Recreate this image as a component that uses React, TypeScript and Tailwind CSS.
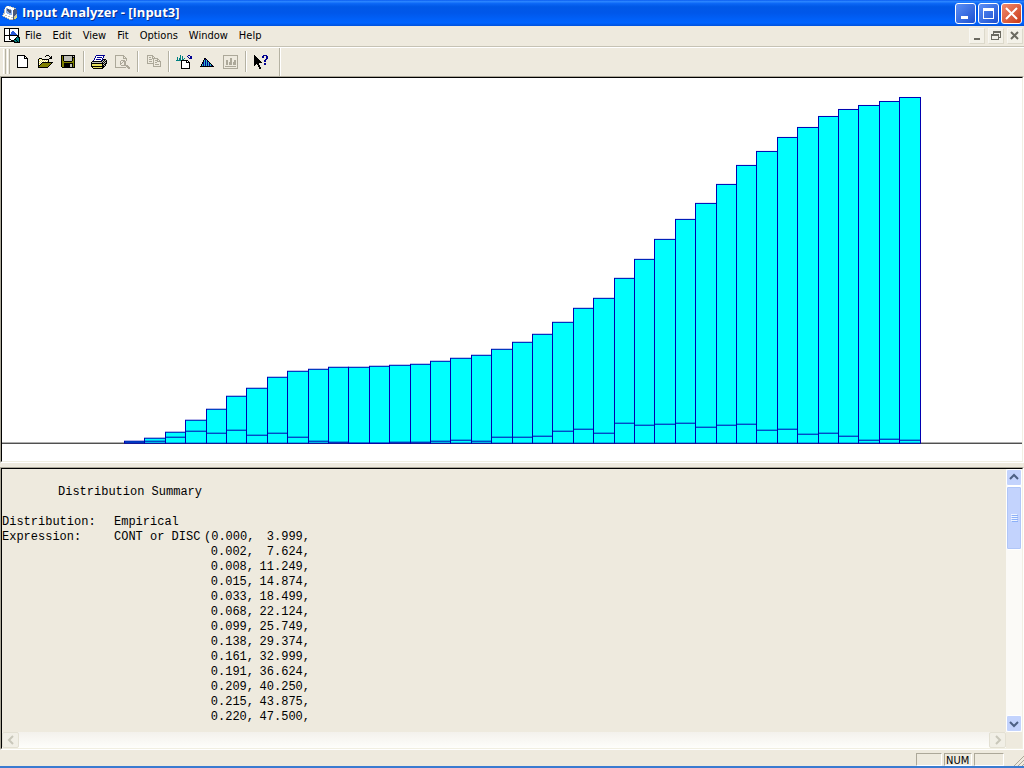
import React from "react";
import { clsx } from "clsx";

const PALETTE: Record<string, string> = {
  K: "#000000",
  W: "#ffffff",
  Y: "#e8e060",
  O: "#808000",
  G: "#aca899",
  S: "#c0c0b8",
  T: "#008080",
  C: "#30b8c8",
  N: "#000090",
  B: "#2858d8",
  D: "#4a5878",
  L: "#8fb0e8",
};

interface PixelIconProps {
  rows: string[];
}

function PixelIcon({ rows }: PixelIconProps) {
  return (
    <svg
      width="16"
      height="16"
      viewBox="0 0 16 16"
      shapeRendering="crispEdges"
      aria-hidden="true"
      className="shrink-0"
    >
      {rows.map((row, y) =>
        row
          .split("")
          .map((c, x) =>
            PALETTE[c] ? (
              <rect key={`${x}-${y}`} x={x} y={y} width="1" height="1" fill={PALETTE[c]} />
            ) : null
          )
      )}
    </svg>
  );
}

const ICONS: Record<string, string[]> = {
  new: [
    "...KKKKKKKK.....",
    "...KWWWWWWKK....",
    "...KWWWWWWKWK...",
    "...KWWWWWWKKKK..",
    "...KWWWWWWWWWK..",
    "...KWWWWWWWWWK..",
    "...KWWWWWWWWWK..",
    "...KWWWWWWWWWK..",
    "...KWWWWWWWWWK..",
    "...KWWWWWWWWWK..",
    "...KWWWWWWWWWK..",
    "...KWWWWWWWWWK..",
    "...KKKKKKKKKKK..",
  ],
  open: [
    ".........KKK....",
    "........K...K.K.",
    ".............KK.",
    "..KKK.......KKK.",
    ".KYWYKKKKKKK....",
    ".KWYWYWYWYWK....",
    ".KYWYWYWYWYK....",
    ".KWYWKKKKKKKKKKK",
    ".KYWKOOOOOOOOOK.",
    ".KWKOOOOOOOOOK..",
    ".KKOOOOOOOOOK...",
    ".KOOOOOOOOOK....",
    ".KKKKKKKKKK.....",
  ],
  save: [
    ".KKKKKKKKKKKKKK.",
    ".KOKSSSSSSSSKSK.",
    ".KOKSSSSSSSSKKK.",
    ".KOKSSSSSSSSKOK.",
    ".KOKSSSSSSSSKOK.",
    ".KOKSSSSSSSSKOK.",
    ".KOOKKKKKKKKOOK.",
    ".KOOOOOOOOOOOOK.",
    ".KOOKKKKKKKKKOK.",
    ".KOOKKKKKKSSKOK.",
    ".KOOKKKKKKSSKOK.",
    ".KOOKKKKKKSSKOK.",
    "..KKKKKKKKKKKKK.",
  ],
  print: [
    ".....NNNNNNNNN..",
    "....NWWWWWWWN...",
    "....NWNNNNNWN...",
    "...NWWWWWWWN....",
    "...NWNNNNNWNKKK.",
    "..NWWWWWWWNKSKSK",
    ".KKKKKKKKKKSKSKK",
    "KSSSSSSSSSSKSKSK",
    "KKKKKKKKKKKKKSKK",
    "KYYYYYYYYYYKSKK.",
    "KYYYYYYYYYYKKSK.",
    "KKKKKKKKKKKKKK..",
    ".KYYYYYYYYYKK...",
    "..KKKKKKKKKK....",
  ],
  preview: [
    ".GGGGGGGGG......",
    ".G.......GG.....",
    ".G.......G.G....",
    ".G.......GGGG...",
    ".G..........G...",
    ".G.....GGGG.G...",
    ".G....G..GGG....",
    ".G....G.G.GG....",
    ".G....GG..GG....",
    ".G....G...GG....",
    ".G.....GGGGGGG..",
    ".G..........GGG.",
    ".GGGGGGGGGGG.GGG",
    "..............GG",
  ],
  copy: [
    "..GGGGGG........",
    "..G....GG.......",
    "..G.GG.G.G......",
    "..G....GGGGGG...",
    "..G.GGG.G...GG..",
    "..G.....G.GGG.G.",
    "..G.GGG.G...GGGG",
    "..G.....G.GG...G",
    "..GGGGGGG......G",
    "........G.GGGG.G",
    "........G......G",
    "........GGGGGGGG",
  ],
  input: [
    "....T.......NN..",
    "....T.T....N..NN",
    ".T..T.T.....N.NN",
    ".T.TT.T.T....NNN",
    ".T.TT.TT........",
    "TTTTTKKKKKKK....",
    ".....KWWWWKWK...",
    ".....KWWWWKKKK..",
    ".....KWWWWWWWK..",
    ".....KWWWWWWWK..",
    ".....KWWWWWWWK..",
    ".....KWWWWWWWK..",
    ".....KWWWWWWWK..",
    ".....KKKKKKKKK..",
  ],
  fit: [
    "................",
    "................",
    "................",
    ".....KK.........",
    ".....KNK........",
    "....KCNCK.......",
    "....KCNCNK......",
    "...KNCNCNCK.....",
    "...KNCNCNCNK....",
    "..KCNCNCNCNCK...",
    "..KCNCNCNCNCNK..",
    ".KKKKKKKKKKKKKK.",
  ],
  chart: [
    ".GGGGGGGGGGGGGGG",
    ".G.............G",
    ".G.............G",
    ".G......GG.....G",
    ".G......GG.....G",
    ".G..GG..GG..GG.G",
    ".G..GG..GG..GG.G",
    ".G..GG.GGG.GGG.G",
    ".G..GG.GGG.GGG.G",
    ".G..GG.GGG.GGG.G",
    ".G.............G",
    ".G.GGGGGGGGGGG.G",
    ".G.............G",
    ".GGGGGGGGGGGGGGG",
  ],
  help: [
    ".K........NNNN..",
    ".KK......NN..NN.",
    ".KKK.....NN..NN.",
    ".KKKK........NN.",
    ".KKKKK......NN..",
    ".KKKKKK....NN...",
    ".KKKKKKK...NN...",
    ".KKKKKKKK.......",
    ".KKKKK.....NN...",
    ".KK.KK.....NN...",
    ".K...KK.........",
    ".....KK.........",
    "......KK........",
    "......KK........",
  ],
  doc: [
    "KKKKKKKKKKKKKKK.",
    "KWWWWKWWWWWWWWK.",
    "KWWWWKWWWWWWWWK.",
    "KWWWWKWWBBWWWWK.",
    "KWWWWKWBBBBWWWK.",
    "KWWWWKWBBBBBWWK.",
    "KWWWWKBBBBBBBWK.",
    "KKKKKKKKKKKKKKK.",
    "KWWWWKWWWWWWWKK.",
    "KWWWWKWWWWWWKTKK",
    "KWWWWKWWWWWKTTTK",
    "KWWWWKKWWWKKTTTK",
    "KWWWWWWKKKTTKTTK",
    "KKKKKKKKKKKTTKTK",
    "..........KKKKKK",
  ],
  app: [
    "................",
    "....SWWSS.......",
    "...SWWWWWWSS....",
    "...WLLWWWWWWSS..",
    "..SWLDDLLWWWDD..",
    "..SWLDDDDLWDDDD.",
    "..SWLLDDDLWDDDD.",
    "..SWLLLDDLWDDDD.",
    ".SSWWLLLLLWDDDD.",
    ".SWWWWWLLLWDDDS.",
    "SWWSSWWWWWWDDSS.",
    ".SSWWWSSWWWDSSY.",
    "...SSWWWWSSDSYY.",
    ".....SSWWWWDYY..",
    ".......SSSSDD...",
  ],
};

const MENUS = ["File", "Edit", "View", "Fit", "Options", "Window", "Help"];

const TOOLBAR = [
  [
    { icon: "new", label: "New" },
    { icon: "open", label: "Open" },
    { icon: "save", label: "Save" },
  ],
  [
    { icon: "print", label: "Print" },
    { icon: "preview", label: "Print Preview", disabled: true },
  ],
  [{ icon: "copy", label: "Copy", disabled: true }],
  [
    { icon: "input", label: "Use Existing Data File" },
    { icon: "fit", label: "Fit All" },
    { icon: "chart", label: "Histogram", disabled: true },
  ],
  [{ icon: "help", label: "Context Help" }],
];

// bar heights above the axis, one pair per interval
const CUMULATIVE = [
  2, 5, 11, 23, 34, 47, 55, 66, 72, 74, 76, 76, 77, 78, 79, 82, 85, 88, 94, 101,
  109, 121, 135, 145, 165, 184, 204, 224, 240, 259, 278, 292, 306, 316, 327, 334,
  338, 342, 346,
];
const DENSITY = [
  1, 2, 6, 12, 10, 13, 8, 10, 6, 2, 1, 0, 0, 1, 1, 2, 3, 2, 6, 6, 7, 12, 14, 10,
  20, 18, 19, 20, 16, 18, 19, 13, 14, 9, 10, 7, 3, 4, 3,
];

const AXIS_Y = 365;
const edge = (i: number) => Math.floor(102 + 20.4 * (i + 1));

function Histogram() {
  return (
    <svg
      viewBox="0 0 1020 383"
      preserveAspectRatio="none"
      shapeRendering="crispEdges"
      className="block h-full w-full"
      role="img"
      aria-label="Cumulative histogram"
    >
      <path d={`M0 ${AXIS_Y}.5H1020`} stroke="#000" />
      {CUMULATIVE.map((h, i) => {
        const x = edge(i);
        const w = edge(i + 1) - x;
        return (
          <g key={i} stroke="#0000b0">
            <rect x={x + 0.5} y={AXIS_Y - h + 0.5} width={w} height={h} fill="#00ffff" />
            <path d={`M${x} ${AXIS_Y - DENSITY[i]}.5h${w}`} />
          </g>
        );
      })}
    </svg>
  );
}

const EXPRESSION = [
  ["(0.000,", "3.999,"],
  ["0.002,", "7.624,"],
  ["0.008,", "11.249,"],
  ["0.015,", "14.874,"],
  ["0.033,", "18.499,"],
  ["0.068,", "22.124,"],
  ["0.099,", "25.749,"],
  ["0.138,", "29.374,"],
  ["0.161,", "32.999,"],
  ["0.191,", "36.624,"],
  ["0.209,", "40.250,"],
  ["0.215,", "43.875,"],
  ["0.220,", "47.500,"],
];

function Summary() {
  return (
    <div className="min-h-0 overflow-hidden pt-4 font-['Liberation_Mono',monospace] text-[12px] leading-[15px] whitespace-pre">
      <h2 className="mb-[15px] pl-14">Distribution Summary</h2>
      <table className="w-[308px] table-fixed border-collapse">
        <colgroup>
          <col className="w-28" />
          <col className="w-[90px]" />
          <col className="w-[50px]" />
          <col className="w-14" />
        </colgroup>
        <tbody>
          <tr>
            <th scope="row" className="p-0 text-left font-normal">
              Distribution:
            </th>
            <td className="p-0" colSpan={3}>
              Empirical
            </td>
          </tr>
          {EXPRESSION.map(([probability, value], i) => (
            <tr key={value}>
              <th scope="row" className="p-0 text-left font-normal">
                {i === 0 && "Expression:"}
              </th>
              <td className="p-0">{i === 0 && "CONT or DISC"}</td>
              <td className="p-0 text-right">{probability}</td>
              <td className="p-0 text-right">{value}</td>
            </tr>
          ))}
        </tbody>
      </table>
    </div>
  );
}

interface ArrowProps {
  d: string;
  color: string;
}

function Arrow({ d, color }: ArrowProps) {
  return (
    <svg width="10" height="10" viewBox="0 0 10 10" fill="none" stroke={color} strokeWidth="2">
      <path d={d} />
    </svg>
  );
}

interface PaneProps {
  className: string;
  children: React.ReactNode;
}

function Pane({ className, children }: PaneProps) {
  return (
    <section
      className={clsx(
        "min-h-0 border border-t-[#aca899] border-l-[#aca899] border-r-white border-b-white",
        className
      )}
    >
      <div className="h-full border border-t-black border-l-black border-r-[#f1efe2] border-b-[#f1efe2]">
        {children}
      </div>
    </section>
  );
}

const CAPTION_BUTTON =
  "flex h-[21px] w-[21px] items-center justify-center rounded-[3px] border border-white";
const MDI_BUTTON =
  "flex h-4 w-4 items-center justify-center border border-t-[#f8f7f2] border-l-[#f8f7f2] border-r-[#dcd9cb] border-b-[#dcd9cb] bg-[#f3f1e8]";
const SCROLL_BUTTON =
  "flex h-[17px] w-full shrink-0 items-center justify-center rounded-[2px] border border-white bg-[#c3d3fd]";
const SCROLL_BUTTON_OFF =
  "flex h-4 w-[17px] items-center justify-center rounded-[2px] border border-[#e3e0d3] bg-[#f1efe6]";
const STATUS_CELL =
  "h-[13px] border border-t-[#aca899] border-l-[#aca899] border-r-white border-b-white pl-px";

export default function App() {
  return (
    <div className="flex h-screen flex-col overflow-hidden bg-[#eeeade] font-['DejaVu_Sans_Condensed','DejaVu_Sans',sans-serif] text-[11px] text-black">
      <header className="flex h-[26px] shrink-0 items-center bg-[linear-gradient(to_bottom,#0a5cf0_0%,#2a85ff_6%,#0a66f5_14%,#0058e6_26%,#0057ea_50%,#0060f8_74%,#0064ff_88%,#0052dc_100%)] pr-0.5 pl-0.5">
        <PixelIcon rows={ICONS.app} />
        <h1 className="flex-1 pl-1 font-['Open_Sans','Noto_Sans',sans-serif] text-[13px] font-bold whitespace-nowrap text-white [text-shadow:1px_1px_0_#0a2f8c]">
          Input Analyzer - [Input3]
        </h1>
        <div className="flex gap-0.5">
          <button
            aria-label="Minimize"
            className={clsx(CAPTION_BUTTON, "bg-linear-to-br from-[#5d8ff5] to-[#1c4fd0]")}
          >
            <svg width="15" height="15" viewBox="0 0 15 15">
              <path d="M3 10h7v3H3z" fill="#fff" />
            </svg>
          </button>
          <button
            aria-label="Maximize"
            className={clsx(CAPTION_BUTTON, "bg-linear-to-br from-[#5d8ff5] to-[#1c4fd0]")}
          >
            <svg width="15" height="15" viewBox="0 0 15 15">
              <path d="M2 2h11v11H2zM3 5v7h9V5z" fill="#fff" fillRule="evenodd" />
            </svg>
          </button>
          <button
            aria-label="Close"
            className={clsx(CAPTION_BUTTON, "bg-linear-to-br from-[#f08a6c] to-[#c9370f]")}
          >
            <svg width="15" height="15" viewBox="0 0 15 15" stroke="#fff" strokeWidth="2">
              <path d="M2 2l11 11M13 2L2 13" />
            </svg>
          </button>
        </div>
      </header>

      <nav className="flex h-5 shrink-0 items-center pr-px pl-1">
        <PixelIcon rows={ICONS.doc} />
        {MENUS.map((name) => (
          <button key={name} className="pr-[5px] pl-1.5 leading-4 first-of-type:pl-[5px]">
            {name}
          </button>
        ))}
        <div className="ml-auto flex gap-[3px]">
          <button aria-label="Minimize document" className={MDI_BUTTON}>
            <svg width="10" height="10" viewBox="0 0 10 10">
              <path d="M2 7h6v2H2z" fill="#6b6a60" />
            </svg>
          </button>
          <button aria-label="Restore document" className={MDI_BUTTON}>
            <svg width="10" height="10" viewBox="0 0 10 10" shapeRendering="crispEdges">
              <path
                d="M2 0h8v7H8V6h1V2H3v1H2zM0 3h8v6H0zM1 5v3h6V5z"
                fill="#6b6a60"
                fillRule="evenodd"
              />
            </svg>
          </button>
          <button aria-label="Close document" className={MDI_BUTTON}>
            <svg width="10" height="10" viewBox="0 0 10 10" stroke="#6b6a60" strokeWidth="2">
              <path d="M1 1l7 7M8 1l-7 7" />
            </svg>
          </button>
        </div>
      </nav>

      <div className="flex h-[30px] shrink-0 items-stretch border-t border-[#c5c2b4] shadow-[inset_0_1px_0_#fff]">
        <div className="flex w-2.5 gap-px py-0.5 pl-[3px]">
          <span className="w-[3px] border-r border-l border-r-[#b5b2a3] border-l-white" />
          <span className="w-[3px] border-r border-l border-r-[#b5b2a3] border-l-white" />
        </div>
        {TOOLBAR.map((group, i) => (
          <React.Fragment key={i}>
            {i > 0 && (
              <span className="my-1 mr-0.5 ml-1 w-0.5 border-r border-l border-r-white border-l-[#b5b2a3]" />
            )}
            <div className="flex items-center pt-0.5">
              {group.map((item) => (
                <button
                  key={item.icon}
                  aria-label={item.label}
                  disabled={"disabled" in item}
                  className="flex h-[22px] w-[23px] items-center justify-center"
                >
                  <PixelIcon rows={ICONS[item.icon]} />
                </button>
              ))}
            </div>
          </React.Fragment>
        ))}
        <span className="mt-px ml-[7px] w-0.5 border-r border-l border-r-white border-l-[#b5b2a3]" />
      </div>

      <main className="flex min-h-0 flex-1 flex-col">
        <Pane className="flex-[387] bg-white">
          <Histogram />
        </Pane>
        <div className="h-1 shrink-0" />
        <Pane className="flex-[283]">
          <div className="grid h-full grid-cols-[1fr_16px] grid-rows-[1fr_16px]">
            <Summary />
            <div className="flex flex-col bg-[#fbfaf7]">
              <button aria-label="Scroll up" className={SCROLL_BUTTON}>
                <Arrow d="M1 7l4-4 4 4" color="#4d6185" />
              </button>
              <div className="flex h-[64px] flex-col items-center justify-center gap-px rounded-[2px] border border-white bg-[#c3d3fd] shadow-[inset_0_0_0_1px_#b0c6f8]">
                {[0, 1, 2, 3].map((n) => (
                  <span key={n} className="h-px w-1.5 border-b border-[#eef4fe] shadow-[1px_1px_0_#8cb0f8]" />
                ))}
              </div>
              <div className="flex-1" />
              <button aria-label="Scroll down" className={SCROLL_BUTTON}>
                <Arrow d="M1 3l4 4 4-4" color="#4d6185" />
              </button>
            </div>
            <div className="flex justify-between bg-linear-to-b from-[#f3f1ec] to-[#fefefb]">
              <button aria-label="Scroll left" disabled className={SCROLL_BUTTON_OFF}>
                <Arrow d="M7 1l-4 4 4 4" color="#c9c7ba" />
              </button>
              <button aria-label="Scroll right" disabled className={SCROLL_BUTTON_OFF}>
                <Arrow d="M3 1l4 4-4 4" color="#c9c7ba" />
              </button>
            </div>
          </div>
        </Pane>
      </main>

      <footer className="flex h-[18px] shrink-0 items-end justify-end gap-0.5 border-b-2 border-[#3a7bd0]">
        <div className={clsx(STATUS_CELL, "w-[26px]")} />
        <div className={clsx(STATUS_CELL, "w-7 leading-[13px]")}>NUM</div>
        <div className={clsx(STATUS_CELL, "w-[30px]")} />
        <svg width="18" height="13" viewBox="0 0 18 13" stroke="#aca899" strokeWidth="1">
          <path d="M8 13L18 3M12 13l6-6M16 13l2-2" />
        </svg>
      </footer>
    </div>
  );
}
